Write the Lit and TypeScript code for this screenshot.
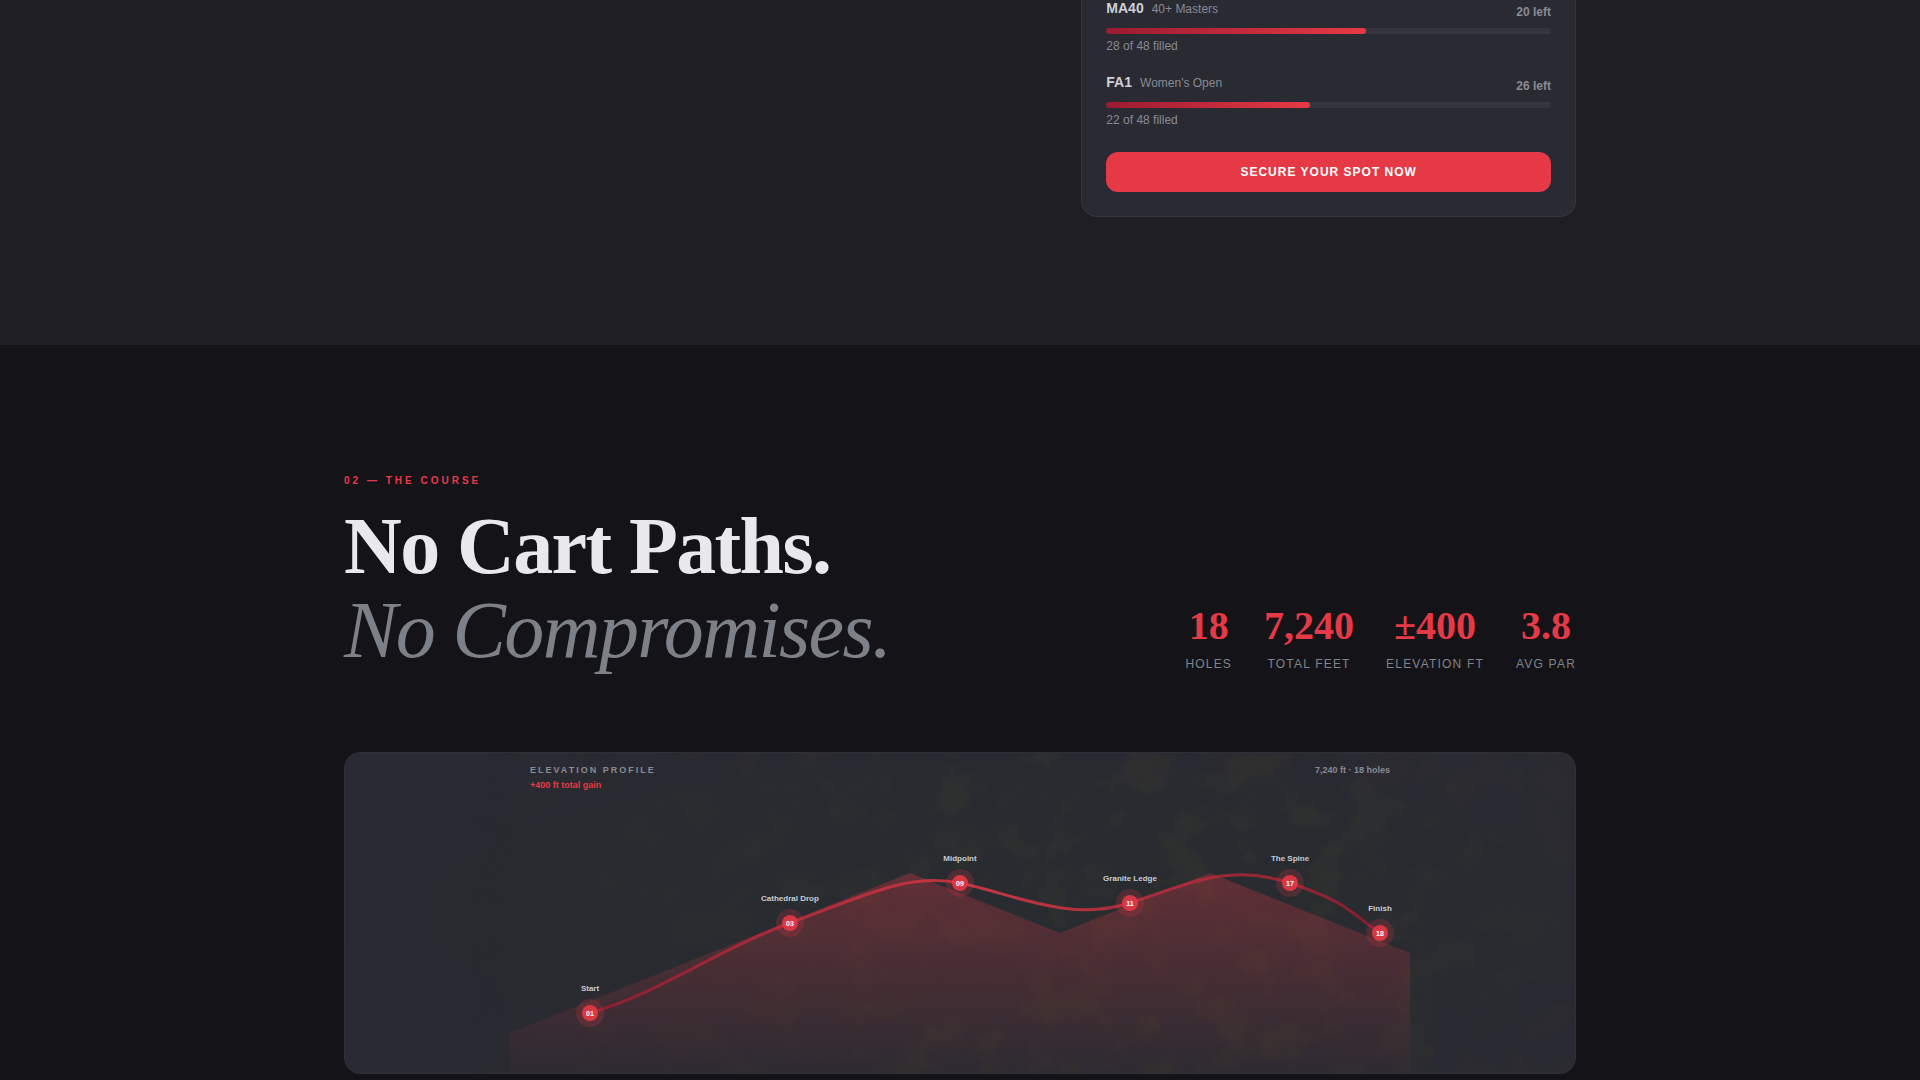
import { LitElement, html, svg, css } from "lit";
import { customElement, property } from "lit/decorators.js";

interface Division {
  code: string;
  name: string;
  filled: number;
  total: number;
}

interface Stat {
  value: string;
  label: string;
}

interface Waypoint {
  hole: string;
  name: string;
  x: number;
  y: number;
}

const DIVISIONS: Division[] = [
  { code: "MA40", name: "40+ Masters", filled: 28, total: 48 },
  { code: "FA1", name: "Women's Open", filled: 22, total: 48 },
];

const STATS: Stat[] = [
  { value: "18", label: "Holes" },
  { value: "7,240", label: "Total Feet" },
  { value: "±400", label: "Elevation Ft" },
  { value: "3.8", label: "Avg Par" },
];

const WAYPOINTS: Waypoint[] = [
  { hole: "01", name: "Start", x: 80, y: 260 },
  { hole: "03", name: "Cathedral Drop", x: 280, y: 170 },
  { hole: "09", name: "Midpoint", x: 450, y: 130 },
  { hole: "11", name: "Granite Ledge", x: 620, y: 150 },
  { hole: "17", name: "The Spine", x: 780, y: 130 },
  { hole: "18", name: "Finish", x: 870, y: 180 },
];

@customElement("division-row")
export class DivisionRow extends LitElement {
  @property({ attribute: false }) division!: Division;

  static styles = css`
    :host {
      display: block;
    }
    .head {
      display: flex;
      justify-content: space-between;
      align-items: flex-end;
      height: 20px;
      margin-bottom: 8px;
      line-height: 16px;
    }
    .title {
      display: flex;
      align-items: baseline;
      align-self: flex-start;
      gap: 8px;
    }
    .code {
      font-size: 14px;
      font-weight: 700;
      color: #cdd0d8;
    }
    .name,
    .filled {
      font-size: 12px;
      color: #888b94;
    }
    .left {
      font-size: 12px;
      font-weight: 700;
      color: #888b94;
    }
    .track {
      height: 6px;
      border-radius: 3px;
      background: #35353f;
      overflow: hidden;
    }
    .fill {
      height: 100%;
      border-radius: 3px;
      background: linear-gradient(90deg, #9b1b30, #e63946);
    }
    .filled {
      margin: 4px 0 0;
      line-height: 16px;
    }
  `;

  render() {
    const { code, name, filled, total } = this.division;
    return html`
      <div class="head">
        <div class="title">
          <span class="code">${code}</span>
          <span class="name">${name}</span>
        </div>
        <span class="left">${total - filled} left</span>
      </div>
      <div class="track">
        <div class="fill" style="width:${(filled / total) * 100}%"></div>
      </div>
      <p class="filled">${filled} of ${total} filled</p>
    `;
  }
}

@customElement("elevation-chart")
export class ElevationChart extends LitElement {
  static styles = css`
    :host {
      display: block;
      border: 1px solid #2f2f37;
      border-radius: 16px;
      overflow: hidden;
      background: #2a2a32;
    }
    .stack {
      display: grid;
    }
    .terrain,
    .profile {
      grid-area: 1 / 1;
      display: block;
      width: 100%;
      height: 320px;
    }
    text {
      font-family: "Liberation Sans", Arial, sans-serif;
      font-weight: 700;
    }
    .caption {
      font-size: 9px;
      fill: #888b94;
    }
    .tracked {
      letter-spacing: 2px;
    }
    .gain {
      font-size: 9px;
      fill: #e63946;
    }
    .place {
      font-size: 8px;
      fill: #c9ccd4;
      text-anchor: middle;
    }
    .hole {
      font-size: 7px;
      fill: #fff;
      text-anchor: middle;
    }
    .end {
      text-anchor: end;
    }
  `;

  render() {
    return html`
      <div class="stack">
        <svg class="terrain" aria-hidden="true">
          <defs>
            <radialGradient id="glow" cx="54%" cy="50%" r="60%">
              <stop offset="0" stop-color="#282b30" />
              <stop offset="0.5" stop-color="#282b30" stop-opacity="0.9" />
              <stop offset="1" stop-color="#282b30" stop-opacity="0" />
            </radialGradient>
            <filter
              id="foliage"
              x="0"
              y="0"
              width="100%"
              height="100%"
              color-interpolation-filters="sRGB"
            >
              <feTurbulence type="fractalNoise" baseFrequency="0.022 0.026" numOctaves="4" seed="8" />
              <feColorMatrix
                values="0 0 0 0 0.2
                        0 0 0 0 0.2
                        0 0 0 0 0.18
                        4 0 0 0 -1.8"
              />
            </filter>
            <linearGradient id="fade" x1="0" y1="0" x2="1" y2="0">
              <stop offset="0.1" stop-color="#000" />
              <stop offset="0.5" stop-color="#fff" />
              <stop offset="0.8" stop-color="#fff" />
              <stop offset="1" stop-color="#666" />
            </linearGradient>
            <mask id="reach"><rect width="100%" height="100%" fill="url(#fade)" /></mask>
          </defs>
          <rect width="100%" height="100%" fill="url(#glow)" />
          <g mask="url(#reach)" opacity="0.5">
            <rect width="100%" height="100%" filter="url(#foliage)" />
          </g>
        </svg>
        <svg class="profile" viewBox="0 0 900 320" role="img" aria-label="Elevation profile">
          <defs>
            <linearGradient id="area" x1="0" y1="0" x2="0" y2="1">
              <stop offset="0" stop-color="#e63946" stop-opacity="0.3" />
              <stop offset="1" stop-color="#e63946" stop-opacity="0.02" />
            </linearGradient>
            <linearGradient id="route" x1="0" y1="0" x2="1" y2="0">
              <stop offset="0" stop-color="#9b1b30" />
              <stop offset="0.5" stop-color="#e63946" />
              <stop offset="1" stop-color="#9b1b30" />
            </linearGradient>
          </defs>
          <path
            d="M0,280 L400,120 L550,180 L700,120 L900,200 L900,320 L0,320 Z"
            fill="url(#area)"
          />
          <path
            d="M80,260 C150,240 200,200 280,170 S400,120 450,130 S560,170 620,150 S720,110 780,130 S840,160 870,180"
            fill="none"
            stroke="url(#route)"
            stroke-width="3"
            stroke-linecap="round"
            opacity="0.8"
          />
          ${WAYPOINTS.map(
            (p) => svg`
              <circle cx=${p.x} cy=${p.y} r="14" fill="#e63946" opacity="0.2" />
              <circle cx=${p.x} cy=${p.y} r="8" fill="#e63946" opacity="0.9" />
              <text class="hole" x=${p.x} y=${p.y + 3}>${p.hole}</text>
              <text class="place" x=${p.x} y=${p.y - 22}>${p.name}</text>
            `
          )}
          <text class="caption tracked" x="20" y="20">ELEVATION PROFILE</text>
          <text class="gain" x="20" y="35">+400 ft total gain</text>
          <text class="caption end" x="880" y="20">7,240 ft · 18 holes</text>
        </svg>
      </div>
    `;
  }
}

@customElement("app-root")
export class AppRoot extends LitElement {
  static styles = css`
    :host {
      display: flex;
      flex-direction: column;
      min-height: 100vh;
      background: #141418;
      font-family: "Liberation Sans", Arial, sans-serif;
    }
    .wrap {
      box-sizing: border-box;
      max-width: 1280px;
      margin: 0 auto;
      padding: 0 24px;
    }
    .register {
      padding-bottom: 128px;
      background: #1f1e24;
    }
    .columns {
      display: grid;
      grid-template-columns: repeat(12, 1fr);
      gap: 32px;
    }
    .card {
      grid-column: 8 / -1;
      box-sizing: border-box;
      display: flex;
      flex-direction: column;
      gap: 24px;
      padding: 0 24px 24px;
      border: 1px solid #35353e;
      border-top: 0;
      border-radius: 0 0 16px 16px;
      background: #2a2a32;
    }
    .divisions {
      display: grid;
      gap: 20px;
    }
    .cta {
      height: 40px;
      border: 0;
      border-radius: 12px;
      background: #e63946;
      color: #fff;
      font-family: inherit;
      font-size: 12px;
      font-weight: 700;
      letter-spacing: 1px;
      text-transform: uppercase;
      cursor: pointer;
    }
    .course {
      padding-top: 128px;
    }
    .intro {
      display: flex;
      justify-content: space-between;
      align-items: flex-end;
      margin-bottom: 80px;
    }
    .eyebrow {
      margin: 0 0 16px;
      font-size: 10px;
      font-weight: 700;
      line-height: 15px;
      letter-spacing: 3px;
      text-transform: uppercase;
      color: #e63946;
    }
    .headline {
      margin: 0;
      font-family: "Liberation Serif", "Times New Roman", serif;
      font-size: 80px;
      font-weight: 700;
      line-height: 84px;
      letter-spacing: -0.02em;
      color: #e8e8ed;
    }
    .quiet {
      display: block;
      font-style: italic;
      font-weight: 400;
      color: #7d8087;
    }
    .stats {
      display: flex;
      gap: 32px;
      margin: 0;
      text-align: center;
    }
    .stat {
      display: flex;
      flex-direction: column-reverse;
      gap: 8px;
    }
    .value {
      margin: 0;
      font-family: "Liberation Serif", "Times New Roman", serif;
      font-size: 40px;
      font-weight: 700;
      line-height: 44px;
      color: #e63946;
    }
    .label {
      font-size: 12px;
      line-height: 16px;
      letter-spacing: 0.1em;
      text-transform: uppercase;
      color: #7f838b;
    }
  `;

  render() {
    return html`
      <section class="register">
        <div class="wrap columns">
          <div class="card">
            <div class="divisions">
              ${DIVISIONS.map((d) => html`<division-row .division=${d}></division-row>`)}
            </div>
            <button class="cta" type="button">Secure Your Spot Now</button>
          </div>
        </div>
      </section>
      <section class="course">
        <div class="wrap">
          <header class="intro">
            <div>
              <p class="eyebrow">02 — The Course</p>
              <h2 class="headline">No Cart Paths. <span class="quiet">No Compromises.</span></h2>
            </div>
            <dl class="stats">
              ${STATS.map(
                (s) => html`
                  <div class="stat">
                    <dt class="label">${s.label}</dt>
                    <dd class="value">${s.value}</dd>
                  </div>
                `
              )}
            </dl>
          </header>
          <elevation-chart></elevation-chart>
        </div>
      </section>
    `;
  }
}
